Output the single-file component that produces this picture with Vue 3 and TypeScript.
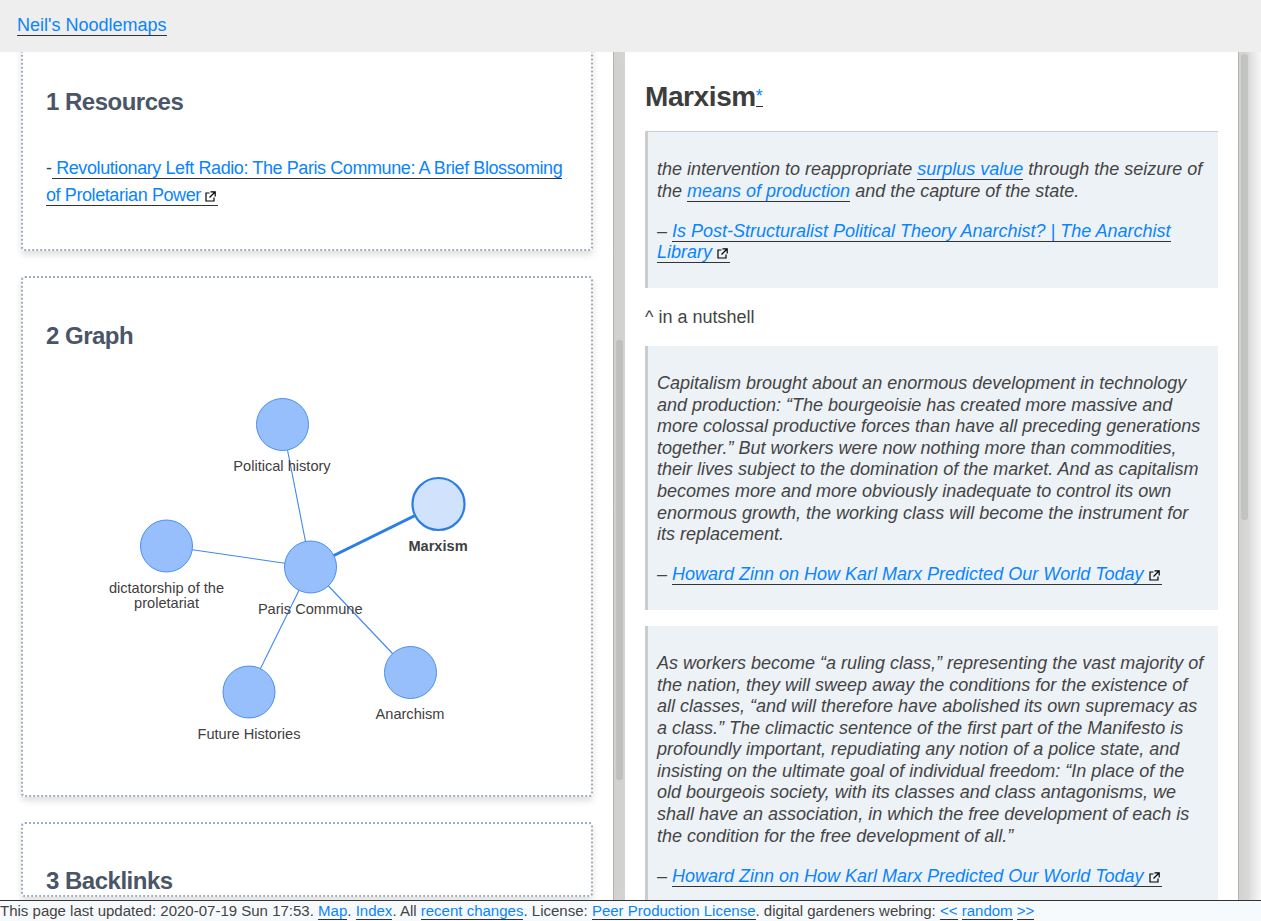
<script setup lang="ts">
type Node = { x: number; y: number; label: string[]; lx: number; ly: number; active?: boolean }
const center = { x: 310.5, y: 567 }
const nodes: Node[] = [
  { x: 282.5, y: 424.5, label: ['Political history'], lx: 282, ly: 471 },
  { x: 438.5, y: 504, label: ['Marxism'], lx: 438, ly: 551, active: true },
  { x: 166.5, y: 546, label: ['dictatorship of the', 'proletariat'], lx: 166.5, ly: 593 },
  { x: 410.5, y: 672.5, label: ['Anarchism'], lx: 410, ly: 719 },
  { x: 249, y: 692, label: ['Future Histories'], lx: 249, ly: 739 },
  { x: 310.5, y: 567, label: ['Paris Commune'], lx: 310.2, ly: 614 },
]
const ox = 46
const oy = 380
const edges = nodes.slice(0, 5)
</script>

<template>
  <div class="page">
    <header class="top"><a href="#" class="lnk">Neil's Noodlemaps</a></header>
    <main class="panes">
      <section class="left">
        <div class="left-content">
          <article class="card first">
            <h2>1 Resources</h2>
            <p class="res">-<a href="#" class="lnk"> Revolutionary Left Radio: The Paris Commune: A Brief Blossoming of Proletarian Power <svg class="ext" viewBox="0 0 11 11"><path d="M4.5 2H1v8h8V6.5M5.5 .8h4.7v4.7M10 1 4.5 6.5" fill="none" stroke="#000" stroke-width="1.2"/></svg></a></p>
          </article>
          <article class="card graph-card">
            <h2>2 Graph</h2>
            <svg class="graph" width="524" height="380" :viewBox="`${ox} ${oy} 524 380`">
              <line v-for="e in edges" :key="e.label[0]" :x1="center.x" :y1="center.y" :x2="e.x" :y2="e.y" :stroke="e.active ? '#2b7de9' : '#3f88f0'" :stroke-width="e.active ? 3 : 1.1" />
              <circle v-for="n in nodes" :key="n.label[0]" :cx="n.x" :cy="n.y" :r="26" :fill="n.active ? '#d0e2fc' : '#97bffb'" :stroke="n.active ? '#2b7de9' : '#4a8ff0'" :stroke-width="n.active ? 2.2 : 1" />
              <text v-for="n in nodes" :key="'t' + n.label[0]" :class="{ strong: n.active }" text-anchor="middle">
                <tspan v-for="(l, i) in n.label" :key="l" :x="n.lx" :y="n.ly + i * 15">{{ l }}</tspan>
              </text>
            </svg>
          </article>
          <article class="card"><h2>3 Backlinks</h2></article>
        </div>
        <div class="bar"><div class="thumb thumb-left"></div></div>
      </section>
      <section class="right">
        <div class="note">
          <h1>Marxism<a href="#" class="lnk star">*</a></h1>
          <blockquote>
            <p>the intervention to reappropriate <a href="#" class="lnk">surplus value</a> through the seizure of the <a href="#" class="lnk">means of production</a> and the capture of the state.</p>
            <p>– <a href="#" class="lnk">Is Post-Structuralist Political Theory Anarchist? | The Anarchist Library <svg class="ext" viewBox="0 0 11 11"><path d="M4.5 2H1v8h8V6.5M5.5 .8h4.7v4.7M10 1 4.5 6.5" fill="none" stroke="#000" stroke-width="1.2"/></svg></a></p>
          </blockquote>
          <p class="plain">^ in a nutshell</p>
          <blockquote>
            <p>Capitalism brought about an enormous development in technology and production: “The bourgeoisie has created more massive and more colossal productive forces than have all preceding generations together.” But workers were now nothing more than commodities, their lives subject to the domination of the market. And as capitalism becomes more and more obviously inadequate to control its own enormous growth, the working class will become the instrument for its replacement.</p>
            <p>– <a href="#" class="lnk">Howard Zinn on How Karl Marx Predicted Our World Today <svg class="ext" viewBox="0 0 11 11"><path d="M4.5 2H1v8h8V6.5M5.5 .8h4.7v4.7M10 1 4.5 6.5" fill="none" stroke="#000" stroke-width="1.2"/></svg></a></p>
          </blockquote>
          <blockquote>
            <p>As workers become “a ruling class,” representing the vast majority of the nation, they will sweep away the conditions for the existence of all classes, “and will therefore have abolished its own supremacy as a class.” The climactic sentence of the first part of the Manifesto is profoundly important, repudiating any notion of a police state, and insisting on the ultimate goal of individual freedom: “In place of the old bourgeois society, with its classes and class antagonisms, we shall have an association, in which the free development of each is the condition for the free development of all.”</p>
            <p>– <a href="#" class="lnk">Howard Zinn on How Karl Marx Predicted Our World Today <svg class="ext" viewBox="0 0 11 11"><path d="M4.5 2H1v8h8V6.5M5.5 .8h4.7v4.7M10 1 4.5 6.5" fill="none" stroke="#000" stroke-width="1.2"/></svg></a></p>
          </blockquote>
        </div>
        <div class="bar"><div class="thumb thumb-right"></div></div>
      </section>
      <div class="edge"></div>
    </main>
    <footer class="foot">This page last updated: 2020-07-19 Sun 17:53. <a href="#" class="lnk">Map</a>. <a href="#" class="lnk">Index</a>. All <a href="#" class="lnk">recent changes</a>. License: <a href="#" class="lnk">Peer Production License</a>. digital gardeners webring: <a href="#" class="lnk">&lt;&lt;</a> <a href="#" class="lnk">random</a> <a href="#" class="lnk">&gt;&gt;</a></footer>
  </div>
</template>

<style>
html, body { margin: 0; overflow: hidden; }
</style>

<style scoped>
.page {
  height: 921px;
  display: grid;
  grid-template-rows: 52px 1fr 21px;
  font-family: "Liberation Sans", Arial, sans-serif;
  font-size: 18px;
  color: #444;
  overflow: hidden;
}
.lnk {
  color: #0a84ff;
  text-decoration: none;
  border-bottom: 1px solid #333;
}
.top {
  background: #eee;
  padding: 15px 17px 0;
  line-height: 21px;
}
.panes {
  display: flex;
  min-height: 0;
  overflow: hidden;
  position: relative;
}
.left {
  width: 625px;
  flex: none;
  display: flex;
  background: #fff;
}
.left-content {
  width: 613px;
  flex: none;
  margin-top: -9px;
}
.bar {
  width: 12px;
  flex: none;
  box-sizing: border-box;
  border-left: 1px solid #b4b4b2;
  background: linear-gradient(90deg, #d2d2d0, #dadad8);
  padding-left: 1.5px;
}
.thumb {
  width: 7px;
  background: #c2c4c2;
  border-radius: 3px;
}
.thumb-left { margin-top: 288px; height: 440px; }
.thumb-right { margin-top: 2px; height: 466px; }
.card {
  box-sizing: border-box;
  width: 572px;
  margin: 0 0 25px 21px;
  padding: 0 23px;
  border: 2px dotted #a0aec0;
  border-radius: 4px;
  background: #fff;
  box-shadow: 0 4px 6px rgba(0, 0, 0, 0.12);
}
.card h2 {
  margin: 0;
  padding-top: 43px;
  font-size: 24px;
  line-height: 28px;
  font-weight: 700;
  letter-spacing: -0.5px;
  color: #4a5568;
}
.first { height: 208px; }
.res {
  margin: 39px 0 0;
  line-height: 27px;
  letter-spacing: -0.41px;
}
.graph-card { height: 521px; }
.graph-card h2 { padding-top: 44px; }
.graph { display: block; margin: 30px 0 0; overflow: visible; }
.graph text { font-size: 14.6px; fill: #404040; font-family: "Liberation Sans", Arial, sans-serif; }
.graph text.strong { font-weight: 700; }
.ext { width: 11px; height: 11px; vertical-align: -1px; margin-right: 2px; }
.right {
  flex: none;
  width: 625px;
  display: flex;
  position: relative;
  box-shadow: 0 0 15px 3px rgba(0, 0, 0, 0.05);
}
.note {
  width: 613px;
  flex: none;
  box-sizing: border-box;
  background: #fff;
  padding: 28px 20px 0;
  overflow: hidden;
}
.note h1 {
  margin: 0 0 17px;
  font-size: 28px;
  line-height: 34px;
  font-weight: 700;
  letter-spacing: -0.4px;
  color: #3d3d3d;
}
.star { font-size: 18px; font-weight: 400; vertical-align: 4px; line-height: 0; letter-spacing: 0; }
blockquote {
  margin: 0 0 16px;
  padding: 27px 10px 24px 9px;
  border-left: 3px solid #ccc;
  background: #edf2f7;
  font-style: italic;
  line-height: 21.6px;
}
.note h1 + blockquote { border-top: 1px solid #ccc; }
blockquote p { margin: 0 0 18.6px; }
blockquote p:last-child { margin-bottom: 0; }
.plain { margin: 19px 0 18px; line-height: 21px; }
.edge {
  flex: 1;
  background: linear-gradient(90deg, #e6e6e6, #f8f8f8);
}
.foot {
  border-top: 1px solid #333;
  background: #f7fafc;
  font-size: 15.03px;
  line-height: 20px;
  white-space: nowrap;
  position: relative;
}
</style>
